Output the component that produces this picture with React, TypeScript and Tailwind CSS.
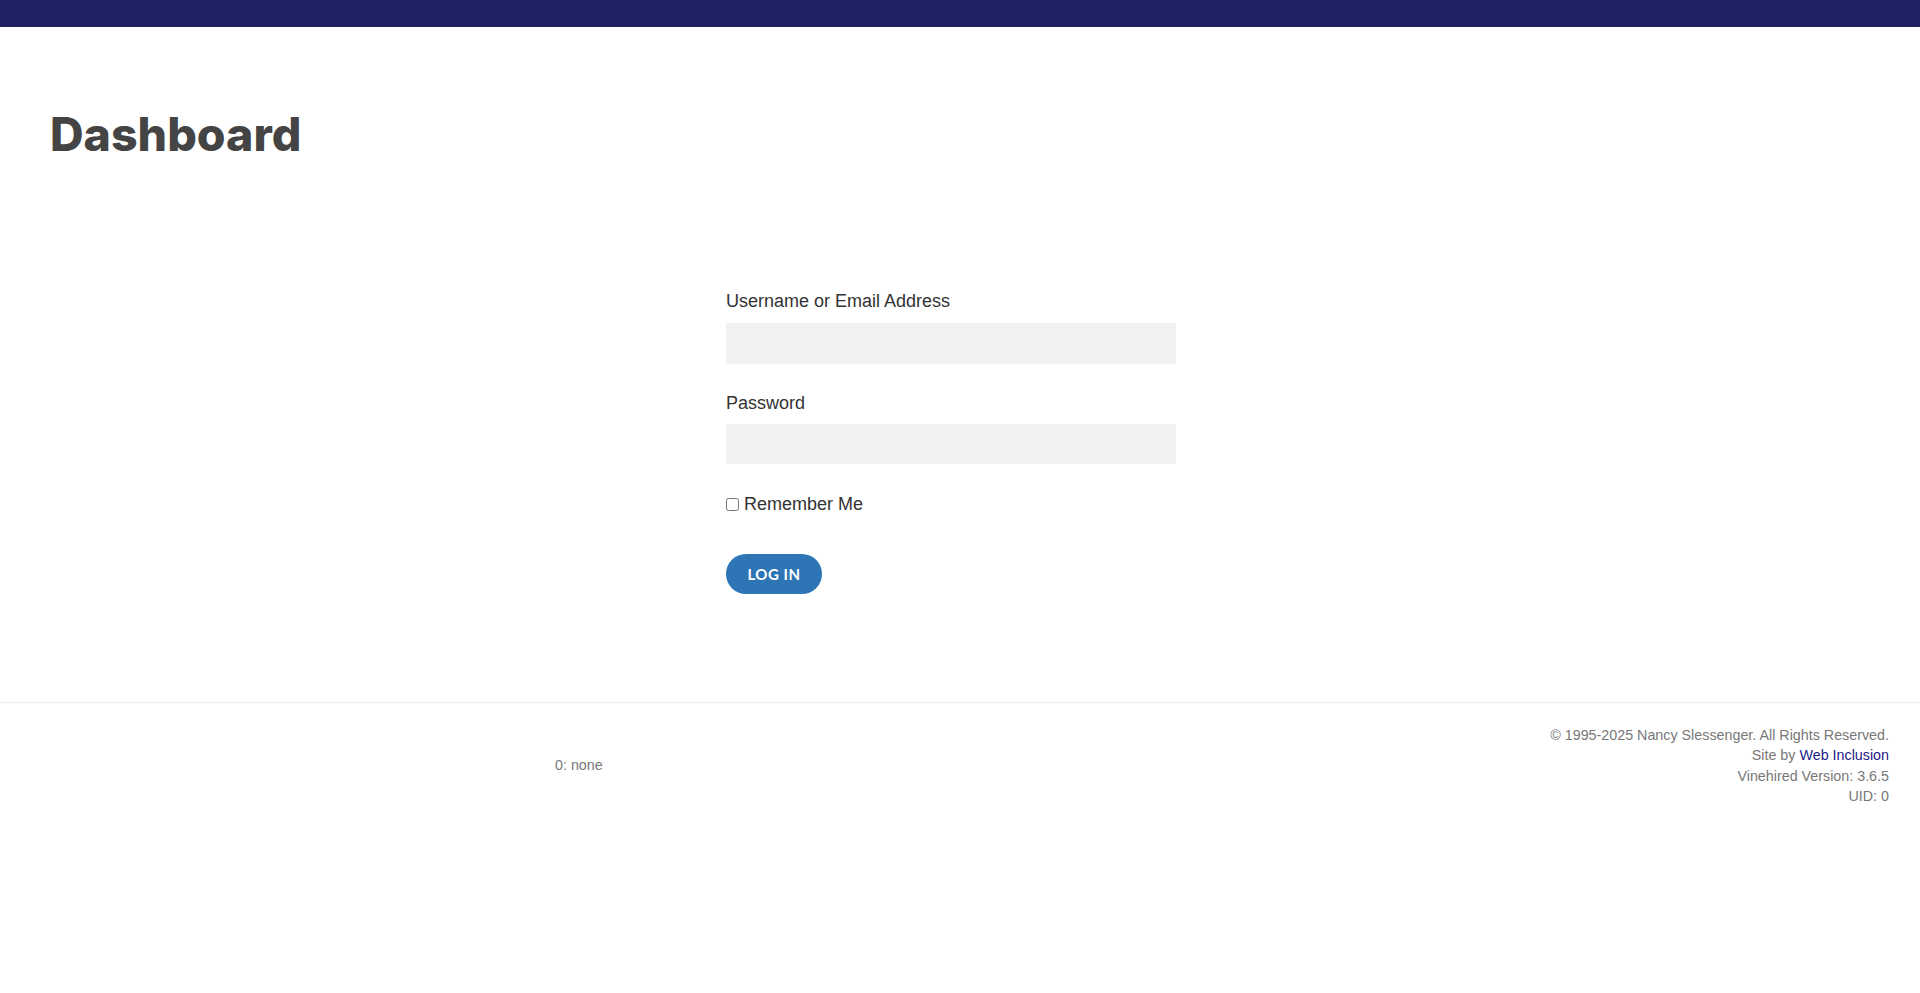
import React from "react";

export default function App() {
  return (
    <div className="min-h-[993px] bg-white font-['Liberation_Sans',Arial,sans-serif]">
      <div className="h-[27px] bg-[#1f2264]" />
      <div className="pl-[50px] pt-[79px]">
        <h1 className="font-['Inter',sans-serif] text-[46.5px] font-extrabold leading-[56px] text-[#444444]">
          Dashboard
        </h1>
      </div>
      <div className="pl-[726px] pt-[128px] pb-[108px]">
        <form className="w-[450px] text-[18px] text-[#333333]">
          <label className="block leading-[22px]">Username or Email Address</label>
          <input className="mt-[11px] block h-[41px] w-[450px] bg-[#f2f2f2] outline-none" type="text" />
          <label className="mt-[28px] block leading-[22px]">Password</label>
          <input className="mt-[10px] block h-[40px] w-[450px] bg-[#f2f2f2] outline-none" type="password" />
          <div className="mt-[29px] flex items-center gap-[5px] leading-[22px]">
            <input type="checkbox" className="m-0 h-[13px] w-[13px]" />
            <span>Remember Me</span>
          </div>
          <button
            type="button"
            className="mt-[39px] h-[40px] w-[96px] rounded-full bg-[#2e75b6] font-['Lato',sans-serif] text-[15px] font-bold tracking-[0.5px] text-white"
          >
            LOG IN
          </button>
        </form>
      </div>
      <footer className="flex items-center border-t border-[#eeeeee] pt-[22px] pr-[31px] text-[14.3px] text-[#777777]">
        <div className="pl-[555px]">0: none</div>
        <div className="ml-auto text-right leading-[20.4px]">
          <div>© 1995-2025 Nancy Slessenger. All Rights Reserved.</div>
          <div>
            Site by <a className="text-[#1e1a86]">Web Inclusion</a>
          </div>
          <div>Vinehired Version: 3.6.5</div>
          <div>UID: 0</div>
        </div>
      </footer>
    </div>
  );
}
